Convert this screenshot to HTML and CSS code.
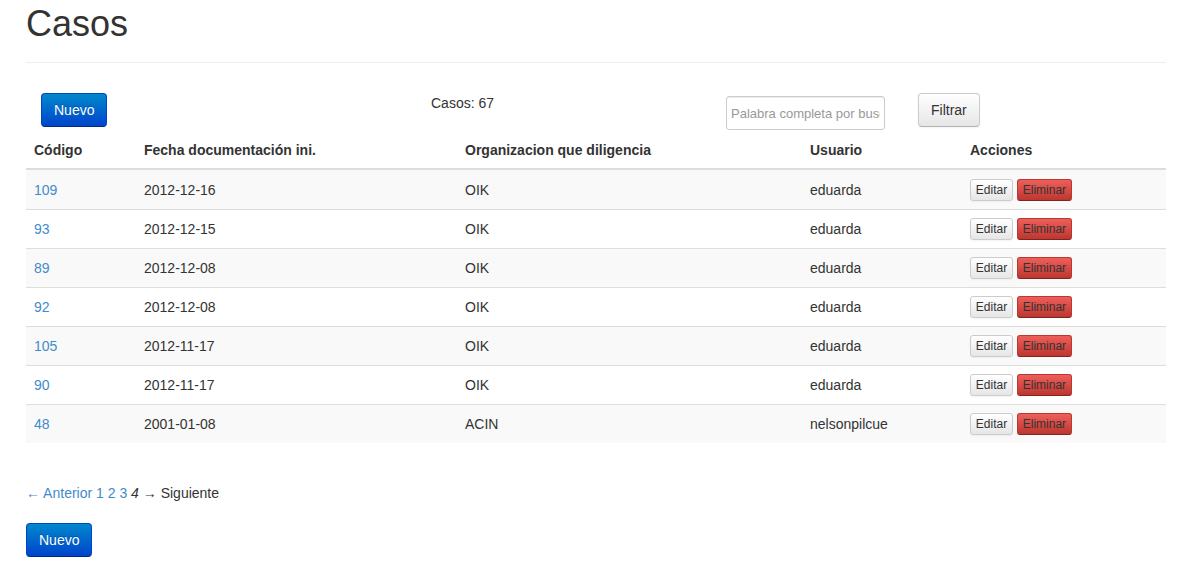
FILE: index.html
```html
<!DOCTYPE html>
<html lang="es">
<head>
<meta charset="utf-8">
<title>Casos</title>
<link rel="stylesheet" href="styles.css">
</head>
<body>
<div class="container">
  <div class="page-header">
    <h1>Casos</h1>
  </div>
  <div class="toolbar">
    <div class="tb-cell"><a class="btn btn-primary btn-new-top" href="#">Nuevo</a></div>
    <div class="tb-cell count">Casos: 67</div>
    <div class="tb-cell"><input class="search" type="text" placeholder="Palabra completa por busqueda"></div>
    <div class="tb-cell"><button class="btn btn-default">Filtrar</button></div>
  </div>
  <table class="table">
    <colgroup>
      <col class="c1"><col class="c2"><col class="c3"><col class="c4"><col class="c5">
    </colgroup>
    <thead>
      <tr><th>Código</th><th>Fecha documentación ini.</th><th>Organizacion que diligencia</th><th>Usuario</th><th>Acciones</th></tr>
    </thead>
    <tbody>
      <tr><td><a href="#">109</a></td><td>2012-12-16</td><td>OIK</td><td>eduarda</td><td><button class="btn-xs btn-default">Editar</button> <button class="btn-xs btn-danger">Eliminar</button></td></tr>
      <tr><td><a href="#">93</a></td><td>2012-12-15</td><td>OIK</td><td>eduarda</td><td><button class="btn-xs btn-default">Editar</button> <button class="btn-xs btn-danger">Eliminar</button></td></tr>
      <tr><td><a href="#">89</a></td><td>2012-12-08</td><td>OIK</td><td>eduarda</td><td><button class="btn-xs btn-default">Editar</button> <button class="btn-xs btn-danger">Eliminar</button></td></tr>
      <tr><td><a href="#">92</a></td><td>2012-12-08</td><td>OIK</td><td>eduarda</td><td><button class="btn-xs btn-default">Editar</button> <button class="btn-xs btn-danger">Eliminar</button></td></tr>
      <tr><td><a href="#">105</a></td><td>2012-11-17</td><td>OIK</td><td>eduarda</td><td><button class="btn-xs btn-default">Editar</button> <button class="btn-xs btn-danger">Eliminar</button></td></tr>
      <tr><td><a href="#">90</a></td><td>2012-11-17</td><td>OIK</td><td>eduarda</td><td><button class="btn-xs btn-default">Editar</button> <button class="btn-xs btn-danger">Eliminar</button></td></tr>
      <tr><td><a href="#">48</a></td><td>2001-01-08</td><td>ACIN</td><td>nelsonpilcue</td><td><button class="btn-xs btn-default">Editar</button> <button class="btn-xs btn-danger">Eliminar</button></td></tr>
    </tbody>
  </table>
  <div class="pagination"><a href="#">← Anterior</a> <a href="#">1</a> <a href="#">2</a> <a href="#">3</a> <em>4</em> → Siguiente</div>
  <div class="bottom"><a class="btn btn-primary" href="#">Nuevo</a></div>
</div>
</body>
</html>
```

FILE: styles.css
```css
* { box-sizing: border-box; }
html, body { margin: 0; padding: 0; background: #fff; }
body {
  font-family: "Liberation Sans", Arial, sans-serif;
  font-size: 14px;
  line-height: 20px;
  color: #333;
}
a { color: #428bca; text-decoration: none; }
.container { width: 1140px; margin-left: 26px; }
.page-header {
  padding-bottom: 8px;
  border-bottom: 1px solid #eee;
  margin-bottom: 30px;
}
h1 {
  margin: 4px 0 10px;
  font-size: 36px;
  line-height: 40px;
  font-weight: 500;
}
.toolbar {
  display: grid;
  grid-template-columns: 405px 295px 192px 1fr;
  height: 39px;
}
.btn-new-top { margin-left: 15px; }
.search {
  margin-top: 3px;
  width: 159px;
  height: 34px;
  padding: 6px 4px;
  font-family: "Liberation Sans", Arial, sans-serif;
  font-size: 13px;
  color: #555;
  border: 1px solid #ccc;
  border-radius: 3px;
  box-shadow: inset 0 1px 1px rgba(0,0,0,0.075);
}
.search::placeholder { color: #999; }
.btn {
  display: inline-block;
  height: 34px;
  padding: 6px 12px;
  font-family: "Liberation Sans", Arial, sans-serif;
  font-size: 14px;
  line-height: 20px;
  border-radius: 4px;
  border: 1px solid #ccc;
  cursor: pointer;
}
.btn-primary {
  color: #fff;
  background: linear-gradient(#0088cc, #0044cc);
  border-color: #0044cc #0044cc #002a80;
  text-shadow: 0 -1px 0 rgba(0,0,0,0.25);
}
.btn-default {
  color: #333;
  background: linear-gradient(#ffffff, #e6e6e6);
  border-color: #ccc #ccc #b3b3b3;
  box-shadow: inset 0 1px 0 rgba(255,255,255,0.2), 0 1px 2px rgba(0,0,0,0.05);
}
.btn-xs {
  display: inline-block;
  height: 22px;
  padding: 1px 4px;
  font-family: "Liberation Sans", Arial, sans-serif;
  font-size: 12px;
  line-height: 18px;
  border-radius: 3px;
  border: 1px solid #ccc;
  vertical-align: middle;
}
.btn-xs.btn-default { width: 43px; }
.btn-danger {
  width: 55px;
  color: #333;
  background: linear-gradient(#ee5f5b, #bd362f);
  border-color: #bd362f #bd362f #802420;
}
.table {
  width: 100%;
  border-collapse: separate;
  border-spacing: 0;
  margin-bottom: 40px;
}
.c1 { width: 110px; }
.c2 { width: 321px; }
.c3 { width: 345px; }
.c4 { width: 160px; }
.c5 { width: 204px; }
.table th, .table td {
  padding: 0 8px;
  text-align: left;
  vertical-align: middle;
  line-height: 20px;
}
.table th {
  font-weight: bold;
  border-bottom: 2px solid #ddd;
  height: 38px;
}
.table td {
  border-top: 1px solid #ddd;
  height: 39px;
}
.table tbody tr:first-child td { border-top: 0; }
.table tbody tr:nth-child(odd) td { background: #f9f9f9; }
.pagination { line-height: 20px; margin-bottom: 20px; }
.pagination em { font-style: italic; }
.bottom { height: 34px; }
```
